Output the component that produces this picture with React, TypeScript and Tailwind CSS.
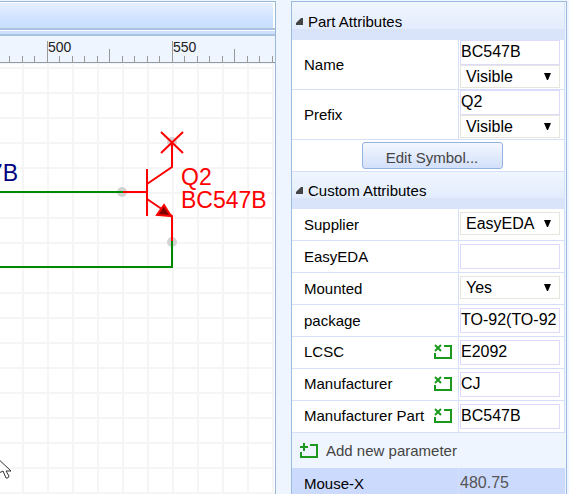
import { useId, type ReactNode } from "react";

const LABEL = "text-[15px] leading-5 text-black";

function Ruler() {
  const ticks = Array.from({ length: 60 }, (_, i) => i);
  return (
    <svg className="block h-7 w-full flex-none bg-[#eff5fe]" aria-label="Horizontal ruler">
      {ticks.map((i) => {
        const x = Math.floor(9.5 + i * 12.5);
        const step = (i + 7) % 10;
        const top = step === 0 ? 5 : step === 5 ? 13 : 20;
        return <rect key={i} x={x} y={top} width="1" height={26 - top} fill="#999" />;
      })}
      <rect x="0" y="26" width="100%" height="1" fill="#999" />
      <text x="48" y="16" fontSize="14" fill="#222">500</text>
      <text x="173" y="16" fontSize="14" fill="#222">550</text>
    </svg>
  );
}

function Schematic() {
  return (
    <svg className="block min-h-0 w-full flex-1 bg-white" aria-label="Schematic canvas">
      <defs>
        <pattern id="grid" width="25" height="25" x="22" y="3" patternUnits="userSpaceOnUse">
          <path d="M0 0H25V2H2V25H0Z" fill="#f5f5f5" />
        </pattern>
      </defs>
      <rect width="100%" height="100%" fill="url(#grid)" />
      <g transform="translate(0 -64)">
        <g fill="#d3d3d3">
          <circle cx="122" cy="192" r="5" />
          <circle cx="172" cy="142" r="5" />
          <circle cx="172" cy="242" r="5" />
        </g>
        <g fill="none" strokeWidth="2">
          <path d="M0 192H123M172 241V267H0" stroke="#008800" />
          <path d="M123 192H147M147 169V216M147 184L172 167V142M147 199L172 216V241" stroke="#f00" />
          <path d="M161 132L183 153M183 132L161 153" stroke="#f00" />
        </g>
        <path d="M164 205L171 216L157 215Z" fill="#800000" stroke="#f00" strokeWidth="2" />
        <g fontSize="23">
          <text x="181" y="185" fill="#f00">Q2</text>
          <text x="181" y="208" fill="#f00">BC547B</text>
          <text x="18" y="181" textAnchor="end" fill="#000080">7B</text>
        </g>
        <path
          d="M-6 455V478L-1 473L3 471L6 478Q8 479 9 476L6 471H11L-6 455Z"
          fill="#fff"
          stroke="#333"
        />
      </g>
    </svg>
  );
}

function SectionHeader({ children }: { children: ReactNode }) {
  return (
    <tr>
      <th colSpan={2} className="h-[37px] border-r border-[#d8e2fb] bg-linear-to-b from-[#f0f6ff] from-0% via-[#e3ecfd] via-70% to-[#d9e4fb] to-70% p-0 pl-1 text-left font-normal">
        <button type="button" className={`flex items-center gap-1 ${LABEL}`}>
          <svg width="8" height="10" aria-hidden="true">
            <path d="M5 1H7V8H0V6Z" fill="#444" />
          </svg>
          {children}
        </button>
      </th>
    </tr>
  );
}

function ValueInput({ id, value = "" }: { id: string; value?: string }) {
  return (
    <input
      id={id}
      defaultValue={value}
      className="block h-[25px] w-full border border-[#dcdcfa] bg-white pb-0.5 text-base leading-5 text-black"
    />
  );
}

function ValueSelect({ id, value, label }: { id: string; value: string; label?: string }) {
  return (
    <div className="relative">
      <select
        id={id}
        aria-label={label}
        className="block h-[23px] w-full appearance-none border border-[#e6e6de] bg-white pl-[5px] text-base leading-5 text-black"
      >
        <option>{value}</option>
      </select>
      <svg width="8" height="7" className="pointer-events-none absolute top-2 right-2" aria-hidden="true">
        <path d="M0 0H7L4 7H3Z" fill="#000" />
      </svg>
    </div>
  );
}

function ParamIcon({ add = false }: { add?: boolean }) {
  return (
    <svg width="18" height="16" fill="none" aria-hidden="true">
      <path d="M10 2H17V14H1V9" stroke="#1c981c" strokeWidth="2" />
      {add ? (
        <path d="M4 0V8M0 4H8" stroke="#1c981c" strokeWidth="2" />
      ) : (
        <path d="M1 1L7 7M7 1L1 7" stroke="#1c981c" strokeWidth="2" />
      )}
    </svg>
  );
}

function Row({
  name,
  value = "",
  kind = "input",
  removable = false,
}: {
  name: string;
  value?: string;
  kind?: "input" | "select" | "both";
  removable?: boolean;
}) {
  const id = useId();
  const tall = kind === "both";
  return (
    <tr>
      <td className={`border-r border-b border-[#d5e0f8] bg-white p-0 pl-3 ${tall ? "h-[50px]" : "h-8"}`}>
        <div className={`flex items-center justify-between pr-1.5 ${removable ? "pb-0.5" : ""}`}>
          <label htmlFor={id} className={`whitespace-nowrap ${LABEL}`}>{name}</label>
          {removable && (
            <button type="button" aria-label={`Remove ${name}`}>
              <ParamIcon />
            </button>
          )}
        </div>
      </td>
      <td className={`border-r border-b border-[#d5e0f8] bg-white p-0 pr-1 pl-px align-top ${tall ? "" : "pt-[3px]"}`}>
        {kind !== "select" && <ValueInput id={id} value={value} />}
        {kind === "select" && <ValueSelect id={id} value={value} />}
        {tall && <ValueSelect id={`${id}-visibility`} value="Visible" label={`${name} visibility`} />}
      </td>
    </tr>
  );
}

export default function App() {
  return (
    <div className="flex h-screen gap-[15px] overflow-hidden bg-[#eef5fe] pt-px pr-0.5 font-['Liberation_Sans',Arial,sans-serif]">
      <main className="flex min-w-0 flex-1 flex-col border-t border-r border-[#99b7d6]">
        <div className="h-[26px] flex-none border-t border-r-2 border-white bg-linear-to-b from-[#e6f0ff] to-[#cbdfff] to-80%" />
        <div className="h-2 flex-none border-y-2 border-[#a9c3df] bg-[#cfe0fc]">
          <div className="h-px bg-white" />
        </div>
        <Ruler />
        <Schematic />
      </main>
      <aside className="w-[276px] flex-none border border-b-0 border-[#99bbe0] pt-px pr-px">
        <table className="w-full table-fixed border-separate border-spacing-0">
          <colgroup>
            <col className="w-[167px]" />
            <col />
          </colgroup>
          <tbody>
            <SectionHeader>Part Attributes</SectionHeader>
            <Row name="Name" value="BC547B" kind="both" />
            <Row name="Prefix" value="Q2" kind="both" />
            <tr>
              <td colSpan={2} className="h-8 border-r border-b border-[#d5e0f8] bg-white p-0 pl-2">
                <button
                  type="button"
                  className="mx-auto block h-[27px] w-[141px] rounded-[3px] border border-[#94b4e0] bg-linear-to-b from-[#f3f7ff] to-[#d3e0fa] pt-1 text-[15px] leading-5 text-[#444]"
                >
                  Edit Symbol...
                </button>
              </td>
            </tr>
            <SectionHeader>Custom Attributes</SectionHeader>
            <Row name="Supplier" value="EasyEDA" kind="select" />
            <Row name="EasyEDA" />
            <Row name="Mounted" value="Yes" kind="select" />
            <Row name="package" value="TO-92(TO-92" />
            <Row name="LCSC" value="E2092" removable />
            <Row name="Manufacturer" value="CJ" removable />
            <Row name="Manufacturer Part" value="BC547B" removable />
            <tr>
              <td colSpan={2} className="h-[35px] bg-[#eff5fe] p-0 pl-2">
                <button type="button" className="flex items-center gap-2 text-[15px] leading-5 text-[#444]">
                  <ParamIcon add />
                  Add new parameter
                </button>
              </td>
            </tr>
            <tr className="bg-[#ccdafe]">
              <th scope="row" className={`h-8 border-r border-[#d5e0f8] p-0 pl-3 text-left font-normal ${LABEL}`}>Mouse-X</th>
              <td className="p-0 pb-0.5 pl-px text-base leading-5 text-[#555]">480.75</td>
            </tr>
          </tbody>
        </table>
      </aside>
    </div>
  );
}
